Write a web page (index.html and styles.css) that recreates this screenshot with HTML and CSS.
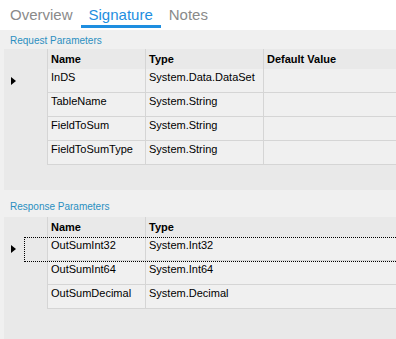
FILE: index.html
```html
<!DOCTYPE html>
<html lang="en">
<head>
  <meta charset="UTF-8" />
  <title>Method Signature</title>
  <link rel="stylesheet" href="styles.css">
</head>
<body>
<div class="tabs">
  <div class="tab">Overview</div>
  <div class="tab active">Signature</div>
  <div class="tab">Notes</div>
</div>

<div class="group-label first">Request Parameters</div>
<div class="grid request">
  <div class="row head">
    <div class="cell rowhead"></div>
    <div class="cell">Name</div>
    <div class="cell">Type</div>
    <div class="cell">Default Value</div>
  </div>
  <div class="row">
    <div class="cell rowhead"><span class="pointer"></span></div>
    <div class="cell">InDS</div>
    <div class="cell">System.Data.DataSet</div>
    <div class="cell"></div>
  </div>
  <div class="row">
    <div class="cell rowhead"></div>
    <div class="cell">TableName</div>
    <div class="cell">System.String</div>
    <div class="cell"></div>
  </div>
  <div class="row">
    <div class="cell rowhead"></div>
    <div class="cell">FieldToSum</div>
    <div class="cell">System.String</div>
    <div class="cell"></div>
  </div>
  <div class="row">
    <div class="cell rowhead"></div>
    <div class="cell">FieldToSumType</div>
    <div class="cell">System.String</div>
    <div class="cell"></div>
  </div>
</div>

<div class="group-label">Response Parameters</div>
<div class="grid response">
  <div class="row head">
    <div class="cell rowhead"></div>
    <div class="cell">Name</div>
    <div class="cell">Type</div>
  </div>
  <div class="row focused">
    <div class="cell rowhead"><span class="pointer"></span></div>
    <div class="cell">OutSumInt32</div>
    <div class="cell">System.Int32</div>
  </div>
  <div class="row">
    <div class="cell rowhead"></div>
    <div class="cell">OutSumInt64</div>
    <div class="cell">System.Int64</div>
  </div>
  <div class="row">
    <div class="cell rowhead"></div>
    <div class="cell">OutSumDecimal</div>
    <div class="cell">System.Decimal</div>
  </div>
</div>
</body>
</html>
```

FILE: styles.css
```css
:root {
  --page-bg: #f0f0f0;
  --grid-bg: #e9e9e9;
  --cell-bg: #f0f0f0;
  --line: #d5d5d5;
  --accent: #1e8ee0;
  --label: #2b8fc0;
}

body {
  margin: 0;
  background-color: var(--page-bg);
  font-family: 'Liberation Sans', Arial, sans-serif;
  font-size: 11px;
  color: #000;
  height: 339px;
  overflow: hidden;
}

.tabs {
  display: flex;
  height: 30px;
  padding-left: 2px;
  background: #fff;
  box-sizing: border-box;
}

.tab {
  padding: 4px 8px 0;
  height: 28px;
  box-sizing: border-box;
  line-height: 21px;
  font-size: 15px;
  color: #8a8a8a;
  border-bottom: 3px solid transparent;
}

.tab.active {
  color: var(--accent);
  border-bottom-color: var(--accent);
}

.group-label {
  padding: 10px 10px 4px;
  font-size: 10px;
  line-height: 13px;
  color: var(--label);
}

.group-label.first {
  padding-top: 4px;
  padding-bottom: 2px;
}

.grid {
  margin-left: 4px;
  background: var(--grid-bg);
}

.grid.request {
  height: 141px;
}

.grid.response {
  height: 122px;
}

.row {
  display: grid;
  height: 24px;
}

.request .row {
  grid-template-columns: 44px 98px 118px 1fr;
}

.response .row {
  grid-template-columns: 44px 98px 1fr;
}

.row.head {
  height: 20px;
}

.cell {
  box-sizing: border-box;
  padding: 2px 3px 0;
  line-height: 13px;
  background: var(--cell-bg);
  border-right: 1px solid var(--line);
  border-bottom: 1px solid var(--line);
  white-space: nowrap;
  overflow: hidden;
}

.cell:last-child {
  border-right: none;
}

.head .cell {
  background: var(--grid-bg);
  border-bottom: none;
  font-weight: bold;
  padding-top: 1px;
  line-height: 19px;
}

.cell.rowhead {
  background: var(--grid-bg);
  border-bottom: none;
  display: flex;
  align-items: center;
  padding: 0 0 0 7px;
}

.pointer {
  width: 0;
  height: 0;
  border-left: 5px solid #000;
  border-top: 4px solid transparent;
  border-bottom: 4px solid transparent;
}

.row.focused {
  position: relative;
}

.row.focused::after {
  content: '';
  position: absolute;
  left: 20px;
  right: 0;
  top: 0;
  bottom: -1px;
  border: 1px dotted #000;
  border-right: none;
  pointer-events: none;
}
```
